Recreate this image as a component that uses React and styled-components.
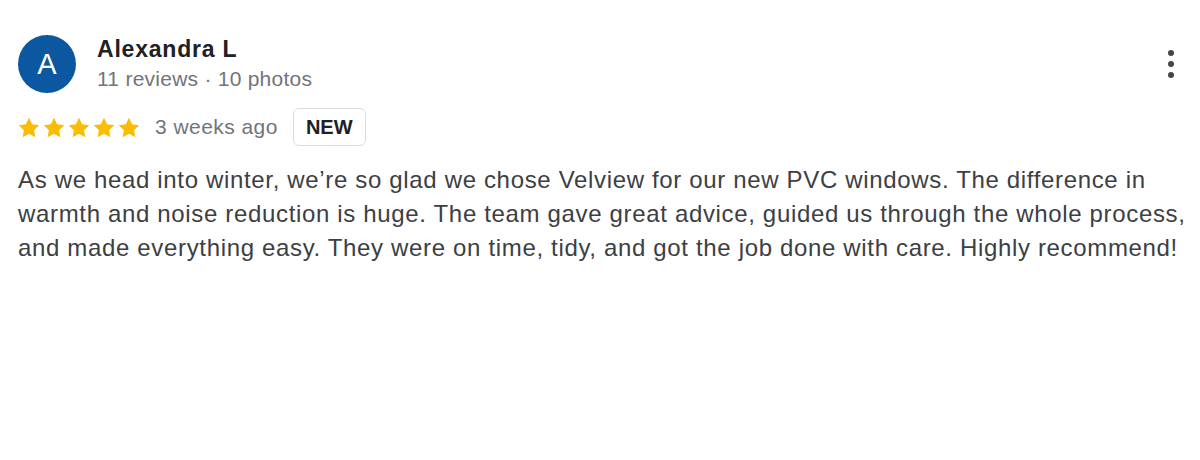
import styled, { createGlobalStyle } from 'styled-components';

const GlobalStyle = createGlobalStyle`
  body {
    margin: 0;
    background: #ffffff;
    font-family: "Liberation Sans", Arial, sans-serif;
  }
`;

const StyledReview = styled.div`
  padding: 35px 18px 0 18px;
`;

const StyledHeader = styled.div`
  display: flex;
  align-items: flex-start;
`;

const StyledAvatar = styled.div`
  width: 58px;
  height: 58px;
  border-radius: 50%;
  background-color: #0b57a0;
  color: #ffffff;
  font-size: 29px;
  display: flex;
  align-items: center;
  justify-content: center;
  flex-shrink: 0;
`;

const StyledAuthor = styled.div`
  margin-left: 21px;
  flex: 1;
  display: flex;
  flex-direction: column;
`;

const StyledName = styled.div`
  font-size: 23px;
  font-weight: bold;
  color: #202124;
  line-height: 28px;
  letter-spacing: 0.8px;
`;

const StyledMeta = styled.div`
  margin-top: 2px;
  font-size: 21px;
  color: #70757a;
  line-height: 28px;
  letter-spacing: 0.25px;
`;

const StyledMenu = styled.button`
  border: none;
  background: none;
  padding: 0;
  margin: 15px 8px 0 0;
  display: flex;
  flex-direction: column;
  gap: 5px;
  cursor: pointer;

  span {
    width: 6px;
    height: 6px;
    border-radius: 50%;
    background-color: #444746;
  }
`;

const StyledRating = styled.div`
  display: flex;
  align-items: center;
  margin-top: 15px;
`;

const StyledStars = styled.div`
  display: flex;
  gap: 3px;
`;

const StyledWhen = styled.span`
  font-size: 21px;
  color: #70757a;
  margin-left: 15px;
  letter-spacing: 0.45px;
`;

const StyledBadge = styled.span`
  margin-left: 15px;
  height: 38px;
  box-sizing: border-box;
  padding: 0 12px;
  border: 1px solid #dadce0;
  border-radius: 6px;
  display: flex;
  align-items: center;
  font-size: 20px;
  font-weight: bold;
  color: #202124;
`;

const StyledText = styled.p`
  margin: 17px 0 0 0;
  font-size: 24px;
  line-height: 34px;
  color: #3c4043;
  letter-spacing: 0.66px;
  white-space: nowrap;
`;

function Star() {
  return (
    <svg width="22" height="21" viewBox="0 0 24 23">
      <path
        fill="#fbbc04"
        d="M12 0.8l3.4 7.2 7.8 1-5.7 5.4 1.5 7.8L12 18.4l-7 3.8 1.5-7.8L0.8 9l7.8-1z"
      />
    </svg>
  );
}

function App() {
  return (
    <>
      <GlobalStyle />
      <StyledReview>
        <StyledHeader>
          <StyledAvatar>A</StyledAvatar>
          <StyledAuthor>
            <StyledName>Alexandra L</StyledName>
            <StyledMeta>11 reviews · 10 photos</StyledMeta>
          </StyledAuthor>
          <StyledMenu aria-label="More">
            <span />
            <span />
            <span />
          </StyledMenu>
        </StyledHeader>
        <StyledRating>
          <StyledStars>
            {[0, 1, 2, 3, 4].map((i) => (
              <Star key={i} />
            ))}
          </StyledStars>
          <StyledWhen>3 weeks ago</StyledWhen>
          <StyledBadge>NEW</StyledBadge>
        </StyledRating>
        <StyledText>
          As we head into winter, we’re so glad we chose Velview for our new PVC windows. The difference in
          <br />
          warmth and noise reduction is huge. The team gave great advice, guided us through the whole process,
          <br />
          and made everything easy. They were on time, tidy, and got the job done with care. Highly recommend!
        </StyledText>
      </StyledReview>
    </>
  );
}

export default App;
